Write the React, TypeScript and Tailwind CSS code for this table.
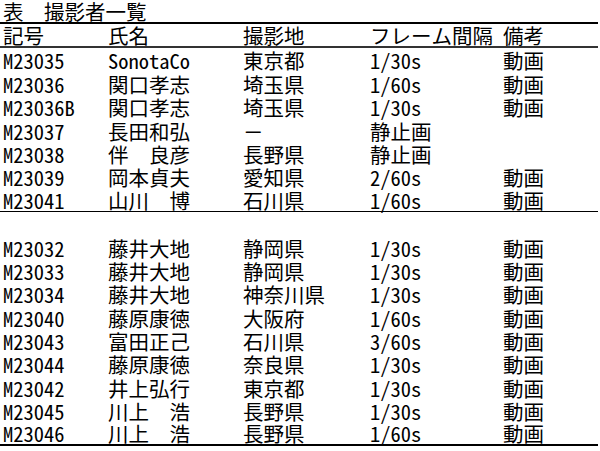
const groupA = [
  ['M23035', 'SonotaCo', '東京都', '1/30s', '動画'],
  ['M23036', '関口孝志', '埼玉県', '1/60s', '動画'],
  ['M23036B', '関口孝志', '埼玉県', '1/30s', '動画'],
  ['M23037', '長田和弘', '－', '静止画', ''],
  ['M23038', '伴　良彦', '長野県', '静止画', ''],
  ['M23039', '岡本貞夫', '愛知県', '2/60s', '動画'],
  ['M23041', '山川　博', '石川県', '1/60s', '動画'],
];

const groupB = [
  ['M23032', '藤井大地', '静岡県', '1/30s', '動画'],
  ['M23033', '藤井大地', '静岡県', '1/30s', '動画'],
  ['M23034', '藤井大地', '神奈川県', '1/30s', '動画'],
  ['M23040', '藤原康徳', '大阪府', '1/60s', '動画'],
  ['M23043', '富田正己', '石川県', '3/60s', '動画'],
  ['M23044', '藤原康徳', '奈良県', '1/30s', '動画'],
  ['M23042', '井上弘行', '東京都', '1/30s', '動画'],
  ['M23045', '川上　浩', '長野県', '1/30s', '動画'],
  ['M23046', '川上　浩', '長野県', '1/60s', '動画'],
];

function Row({ cells, className = '' }: { cells: string[]; className?: string }) {
  return (
    <div className={`grid grid-cols-[105px_135px_127px_133px_1fr] pl-[3px] h-[23.4px] items-end ${className}`}>
      {cells.map((c, i) => (
        <div key={i} className="whitespace-pre leading-[21px]">
          {c}
        </div>
      ))}
    </div>
  );
}

export default function App() {
  return (
    <div
      className="w-[600px] h-[451px] bg-white text-black text-[20.5px] overflow-hidden"
      style={{ fontFamily: '"Noto Sans Mono CJK JP", "Noto Sans CJK JP", monospace' }}
    >
      <div className="w-[598px]">
        <div className="h-[24px] pl-[3px] flex items-end border-b-2 border-black">
          <span className="leading-[22px] whitespace-pre">表　撮影者一覧</span>
        </div>
        <Row cells={['記号', '氏名', '撮影地', 'フレーム間隔', '備考']} className="h-[24px] border-b-2 border-[#333]" />
        {groupA.map((r, i) => (
          <Row key={r[0]} cells={r} className={i === groupA.length - 1 ? 'border-b border-black' : ''} />
        ))}
        <div className="h-[23.4px]" />
        {groupB.map((r, i) => (
          <Row key={r[0]} cells={r} className={i === groupB.length - 1 ? 'border-b-2 border-black' : ''} />
        ))}
      </div>
    </div>
  );
}
